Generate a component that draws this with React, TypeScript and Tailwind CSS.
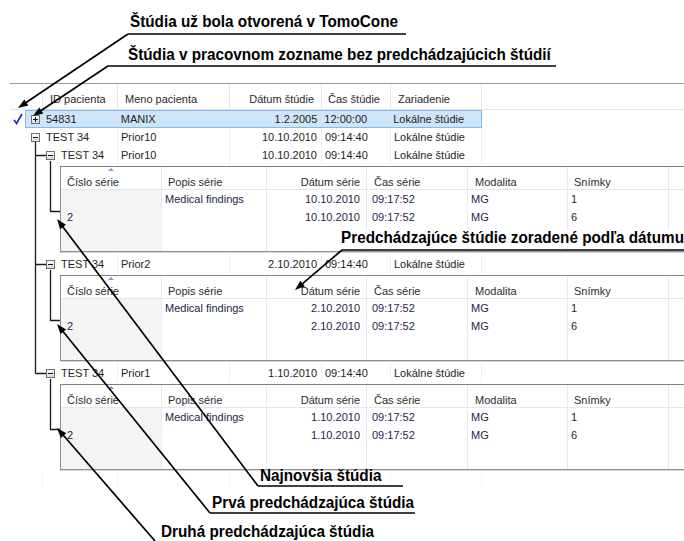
import React from "react";

type Pt = [number, number];

function Arrow({ from, to }: { from: Pt; to: Pt }) {
  const [x1, y1] = from;
  const [x2, y2] = to;
  const dx = x2 - x1;
  const dy = y2 - y1;
  const len = Math.hypot(dx, dy);
  const ux = dx / len;
  const uy = dy / len;
  const L = 10;
  const W = 3.6;
  const bx = x2 - ux * L;
  const by = y2 - uy * L;
  const pts = `${x2},${y2} ${bx - uy * W},${by + ux * W} ${bx + uy * W},${by - ux * W}`;
  return (
    <g>
      <line x1={x1} y1={y1} x2={bx + ux * 2} y2={by + uy * 2} stroke="#000" strokeWidth={1.7} />
      <polygon points={pts} fill="#000" />
    </g>
  );
}

function Expander({ plus }: { plus?: boolean }) {
  return (
    <div className="relative w-[9px] h-[9px] shrink-0 border border-[#6f6f6f] bg-gradient-to-b from-white to-[#d9d9d9]">
      <div className="absolute left-[1px] top-[3px] w-[5px] h-[1px] bg-[#111]" />
      {plus && <div className="absolute left-[3px] top-[1px] w-[1px] h-[5px] bg-[#111]" />}
    </div>
  );
}

function Check() {
  return (
    <svg width="10" height="12" viewBox="0 0 10 12">
      <path d="M1 7 L3.6 10.5 L9 1" fill="none" stroke="#1d22c9" strokeWidth="1.6" />
    </svg>
  );
}

type Row = {
  level: number;
  plus?: boolean;
  id: string;
  name: string;
  date: string;
  time: string;
  selected?: boolean;
  check?: boolean;
};

function MainRow({ r }: { r: Row }) {
  const sep = r.selected ? "" : "border-r border-[#eceff4]";
  return (
    <div className="flex h-[18px] items-center">
      <div className="w-[15px] h-full flex items-center justify-center">{r.check && <Check />}</div>
      <div
        className={`flex h-full w-[457px] items-center ${
          r.selected ? "bg-[#cde4f9] border border-[#85b9ea]" : ""
        }`}
      >
        <div className={`flex h-full w-[93px] items-center gap-[6px] ${sep} ${r.level ? "pl-[21px]" : "pl-[6px]"} ${r.selected ? "-ml-[1px]" : ""}`}>
          <Expander plus={r.plus} />
          <span>{r.id}</span>
        </div>
        <div className={`flex h-full w-[112px] items-center pl-[3px] ${sep}`}>{r.name}</div>
        <div className={`flex h-full w-[92px] items-center justify-end pr-[4px] ${sep}`}>{r.date}</div>
        <div className={`flex h-full w-[69px] items-center pl-[3px] ${sep}`}>{r.time}</div>
        <div className={`flex h-full w-[91px] items-center pl-[3px] ${sep}`}>Lokálne štúdie</div>
      </div>
    </div>
  );
}

function Detail({ date }: { date: string }) {
  const hd = "flex h-full items-center pt-[8px] border-r border-[#e6eaf0]";
  const cd = "flex h-[18px] items-center";
  return (
    <div className="ml-[50px] mt-[2px] mb-[3px] h-[86px] w-[660px] border border-r-0 border-[#8e8e8e] border-t-[#7f7f7f] bg-white text-[#25254a] shadow-[0_1px_0_#d8d8d8]">
      <div className="flex h-[23px] border-b border-[#dfe7f1] text-[#2b2b2b]">
        <div className={`${hd} relative w-[101px] pl-[6px]`}>
          <div className="absolute left-[47px] top-[1px] w-0 h-0 border-x-[3px] border-x-transparent border-b-[3px] border-b-[#6da3da]" />
          Číslo série
        </div>
        <div className={`${hd} w-[105px] pl-[6px]`}>Popis série</div>
        <div className={`${hd} w-[100px] justify-end pr-[6px]`}>Dátum série</div>
        <div className={`${hd} w-[101px] pl-[7px]`}>Čas série</div>
        <div className={`${hd} w-[100px] pl-[7px]`}>Modalita</div>
        <div className={`${hd} w-[101px] pl-[6px]`}>Snímky</div>
        <div className="flex-1" />
      </div>
      <div className="flex h-[61px]">
        <div className="w-[101px] bg-[#f4f4f4] border-r border-[#e6eaf0] pt-[18px]">
          <div className={`${cd} pl-[6px]`}>2</div>
        </div>
        <div className="w-[105px] border-r border-[#e6eaf0]">
          <div className={`${cd} pl-[3px]`}>Medical findings</div>
        </div>
        <div className="w-[100px] border-r border-[#e6eaf0]">
          <div className={`${cd} justify-end pr-[6px]`}>{date}</div>
          <div className={`${cd} justify-end pr-[6px]`}>{date}</div>
        </div>
        <div className="w-[101px] border-r border-[#e6eaf0]">
          <div className={`${cd} pl-[5px]`}>09:17:52</div>
          <div className={`${cd} pl-[5px]`}>09:17:52</div>
        </div>
        <div className="w-[100px] border-r border-[#e6eaf0]">
          <div className={`${cd} pl-[3px]`}>MG</div>
          <div className={`${cd} pl-[3px]`}>MG</div>
        </div>
        <div className="w-[101px] border-r border-[#e6eaf0]">
          <div className={`${cd} pl-[3px]`}>1</div>
          <div className={`${cd} pl-[3px]`}>6</div>
        </div>
        <div className="flex-1" />
      </div>
    </div>
  );
}

const rows: Row[] = [
  { level: 0, plus: true, id: "54831", name: "MANIX", date: "1.2.2005", time: "12:00:00", selected: true, check: true },
  { level: 0, id: "TEST 34", name: "Prior10", date: "10.10.2010", time: "09:14:40" },
  { level: 1, id: "TEST 34", name: "Prior10", date: "10.10.2010", time: "09:14:40" },
];

const label = "whitespace-nowrap text-[16px] leading-none font-bold text-black scale-x-[0.955] origin-left";

export default function App() {
  return (
    <div className="relative w-[684px] h-[541px] overflow-hidden bg-white font-['Liberation_Sans',Arial,sans-serif] text-[11px] text-[#1e1e1e]">
      {/* callouts above the grid */}
      <div className="h-[83px] pt-[14px]">
        <div className={`ml-[130px] ${label}`}>Štúdia už bola otvorená v TomoCone</div>
        <div className={`ml-[128px] mt-[17px] ${label}`}>Štúdia v pracovnom zozname bez predchádzajúcich štúdií</div>
      </div>

      {/* grid */}
      <div className="ml-[10px] border-t border-[#9a9a9a]">
        <div className="flex h-[26px] border-b border-[#dde6f0] text-[#2a2a2a]">
          <div className="w-[33px] border-r border-[#e4e8ee]" />
          <div className="flex w-[75px] items-center pt-[6px] pl-[7px] border-r border-[#e4e8ee]">ID pacienta</div>
          <div className="flex w-[112px] items-center pt-[6px] pl-[7px] border-r border-[#e4e8ee]">Meno pacienta</div>
          <div className="flex w-[92px] items-center justify-end pt-[6px] pr-[7px] border-r border-[#e4e8ee]">Dátum štúdie</div>
          <div className="flex w-[69px] items-center pt-[6px] pl-[6px] border-r border-[#e4e8ee]">Čas štúdie</div>
          <div className="flex w-[91px] items-center pt-[6px] pl-[7px] border-r border-[#e4e8ee]">Zariadenie</div>
          <div className="flex-1" />
        </div>
        {rows.map((r, i) => (
          <MainRow key={i} r={r} />
        ))}
        <Detail date="10.10.2010" />
        <MainRow r={{ level: 1, id: "TEST 34", name: "Prior2", date: "2.10.2010", time: "09:14:40" }} />
        <Detail date="2.10.2010" />
        <MainRow r={{ level: 1, id: "TEST 34", name: "Prior1", date: "1.10.2010", time: "09:14:40" }} />
        <Detail date="1.10.2010" />
        <div className="flex h-[14px] opacity-60">
          <div className="w-[33px] border-r border-[#eef0f4]" />
          <div className="w-[75px] border-r border-[#eef0f4]" />
          <div className="w-[112px] border-r border-[#eef0f4]" />
          <div className="w-[92px] border-r border-[#eef0f4]" />
          <div className="w-[69px] border-r border-[#eef0f4]" />
          <div className="w-[91px] border-r border-[#eef0f4]" />
        </div>
      </div>

      {/* callouts over the grid */}
      <div className={`absolute left-[341px] top-[230px] bg-white ${label}`}>Predchádzajúce štúdie zoradené podľa dátumu</div>
      <div className={`absolute left-[260px] top-[468px] ${label}`}>Najnovšia štúdia</div>
      <div className={`absolute left-[212px] top-[495px] ${label}`}>Prvá predchádzajúca štúdia</div>
      <div className={`absolute left-[161px] top-[524px] ${label}`}>Druhá predchádzajúca štúdia</div>

      <svg className="absolute inset-0 pointer-events-none" width="684" height="541">
        {/* tree connectors */}
        <g stroke="#1a1a1a" strokeWidth="1.3" fill="none">
          <path d="M35.5 142 V373.5 M35.5 155.5 H46 M35.5 264.5 H46 M35.5 373.5 H46" />
          <path d="M50.5 161 V211.5 H60" />
          <path d="M50.5 270 V320.5 H60" />
          <path d="M50.5 379 V429.5 H60" />
        </g>
        {/* underlines */}
        <g stroke="#000" strokeWidth="1.7">
          <line x1="128" y1="34" x2="406" y2="34" />
          <line x1="108" y1="66" x2="556" y2="66" />
          <line x1="342" y1="250" x2="684" y2="250" />
          <line x1="258" y1="486" x2="403" y2="486" />
          <line x1="210" y1="513" x2="415" y2="513" />
        </g>
        <Arrow from={[128, 34]} to={[18, 108]} />
        <Arrow from={[108, 66]} to={[33, 116]} />
        <Arrow from={[342, 250]} to={[295, 290]} />
        <Arrow from={[258, 486]} to={[57, 219]} />
        <Arrow from={[210, 513]} to={[57, 324]} />
        <Arrow from={[155, 541]} to={[57, 428]} />
      </svg>
    </div>
  );
}
